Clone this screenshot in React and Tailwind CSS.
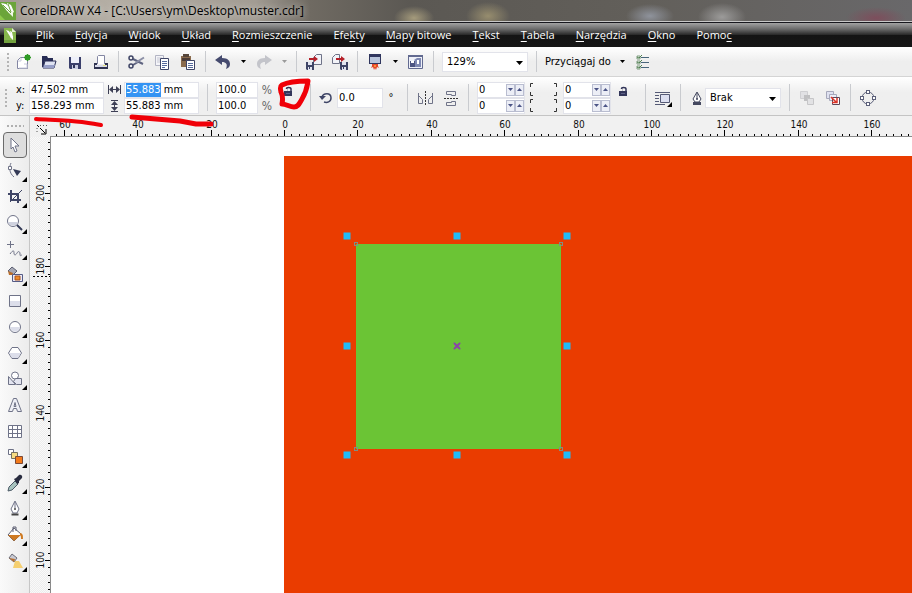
import { useEffect, useRef, useState } from 'react'

const UI_FONT = "font-['DejaVu_Sans_Condensed','Noto_Sans',sans-serif]"

/* ---------- icons ---------- */

function Svg({ w = 18, h = 18, children }) {
  return (
    <svg width={w} height={h} viewBox={`0 0 ${w} ${h}`} fill="none" className="shrink-0" aria-hidden="true">
      {children}
    </svg>
  )
}

const ink = '#3f4566'
const soft = '#6f7388'

const CorelLogo = () => (
  <Svg w={16} h={18}>
    <path d="M0 0h16v18H4L0 14z" fill="#6ba53a" />
    <path d="M0 13l5 5H0z" fill="#8fca4c" />
    <path d="M1 1l5 1 6 6-1 4-4-3z" fill="#fff" />
    <path d="M7 1l4 2 3 7-3 2-3-6z" fill="#fff" />
    <path d="M8 10l5-1v6z" fill="#f1f8e8" />
    <path d="M3 3l8 8M8 2l3 8" stroke="#6ba53a" />
  </Svg>
)

const DocLogo = () => (
  <Svg w={12} h={16}>
    <path d="M0 1h8l4 4v11H0z" fill="#86b64c" />
    <path d="M8 1l4 4H8z" fill="#e4efd2" />
    <path d="M2 3l3 1 3 5-1 2zM6 4l2 1 1 5-2-1zM6 10l3-1v4z" fill="#fff" />
    <path d="M0 13h12v3H0z" fill="#5d8e2f" opacity=".5" />
  </Svg>
)

const NewIcon = () => (
  <Svg>
    <path d="M3.500 7.500l3-3h7v11h-10z" fill="#fff" stroke="#8386a3" />
    <path d="M4 8h3V5M10 11h3v4H5" stroke="#c7c9dc" />
    <circle cx="13.500" cy="4.500" r="3" fill="#2f9a26" />
    <path d="M13.500 1v7M10 4.500h7M11 2l5 5M16 2l-5 5" stroke="#2f9a26" />
  </Svg>
)

const OpenIcon = () => (
  <Svg>
    <path d="M2 3h5l1 2h5v3H5l-2 6H2z" fill="#282d55" />
    <path d="M5 8h11l-2 7H3z" fill="#dfe3f2" stroke="#282d55" />
    <path d="M4 12h11l-1 3H3z" fill="#979fc8" />
  </Svg>
)

const SaveIcon = () => (
  <Svg>
    <path d="M3 4h12v12H4l-1-1z" fill="#3a3f6b" />
    <path d="M5 4h8v6H5z" fill="#eef0fa" />
    <path d="M6 12h6v4H6z" fill="#c9cde2" />
    <path d="M7 12h2v3H7z" fill="#2b3058" />
  </Svg>
)

const PrintIcon = () => (
  <Svg>
    <path d="M5.500 11V3.500l1-1h6V11" fill="#fff" stroke="#8386a3" />
    <path d="M2 10h3v2h8v-2h3v6H2z" fill="#2f3350" />
    <path d="M3 12h12v2H3z" fill="#d8daea" />
    <path d="M11 12h3v1h-3z" fill="#e4e37c" />
  </Svg>
)

const CutIcon = () => (
  <Svg>
    <path d="M6 6l10 5M6 12l5-3" stroke="#5f6480" strokeWidth="2" />
    <path d="M9 9.500l8-5" stroke="#8b8fa6" strokeWidth="2" />
    <circle cx="4" cy="5" r="2" stroke={ink} strokeWidth="1.500" />
    <circle cx="4" cy="13" r="2" stroke={ink} strokeWidth="1.500" />
  </Svg>
)

const CopyIcon = () => (
  <Svg>
    <path d="M2.500 2.500h8v10h-8z" fill="#f4f4f8" stroke="#b3b5c4" />
    <path d="M4 5h5M4 7h3M4 9h3" stroke="#c4c6d2" />
    <path d="M7.500 5.500h8v11h-8z" fill="#fff" stroke={ink} />
    <path d="M9 8.500h5M9 10.500h5M9 12.500h5M9 14.500h3" stroke="#55699b" />
  </Svg>
)

const PasteIcon = () => (
  <Svg>
    <path d="M2 3h10v11H2z" fill="#8a6b4e" />
    <path d="M4 1h6v3H4z" fill="#56453a" />
    <path d="M3 5h8v3H3z" fill="#4c3c37" />
    <path d="M7.500 7.500h8v9h-8z" fill="#fff" stroke={ink} />
    <path d="M9 10.500h5M9 12.500h5M9 14.500h5" stroke="#55699b" />
  </Svg>
)

const UndoIcon = () => (
  <Svg>
    <path d="M1 7l7-5v3c6 0 8 3 8 6 0 2-1 4-4 5 2-5 0-7-4-7v3z" fill="#454a6e" />
  </Svg>
)

const RedoIcon = () => (
  <Svg>
    <path d="M17 7l-7-5v3C4 5 2 8 2 11c0 2 1 4 4 5-2-5 0-7 4-7v3z" fill="#c3c4ca" />
  </Svg>
)

const ImportIcon = () => (
  <Svg>
    <path d="M8.500 4.500l3-3h5v10h-8z" fill="#f2f3f8" stroke={soft} />
    <path d="M4 5h5V3l4 3-4 3V7H4z" fill="#b51f28" />
    <path d="M1 9h8v8H2l-1-1z" fill={ink} />
    <path d="M3 9h4v3H3zM3 14h4v3H3z" fill="#e3e5f0" />
    <path d="M4 14h1v2H4z" fill={ink} />
  </Svg>
)

const ExportIcon = () => (
  <Svg>
    <path d="M1.500 4.500l3-3h4v9h-7z" fill="#f2f3f8" stroke={soft} />
    <path d="M5 5h5V3l4 3-4 3V7H5z" fill="#b51f28" />
    <path d="M9 9h8v8h-7l-1-1z" fill={ink} />
    <path d="M11 9h4v3h-4zM11 14h4v3h-4z" fill="#e3e5f0" />
    <path d="M12 14h1v2h-1z" fill={ink} />
  </Svg>
)

const LauncherIcon = () => (
  <Svg>
    <path d="M3 1h12v10H3z" fill="#2f355d" />
    <path d="M4 4h10v6H4z" fill="#b9c5dc" />
    <path d="M6 11h6v2l1 2-2-1-1 3-1-2-1 2-1-3-2 1 1-2z" fill="#e4472a" />
    <path d="M8 12h2v2H8z" fill="#f8913c" />
  </Svg>
)

const WelcomeIcon = () => (
  <Svg>
    <path d="M1.500 2.500h14v13h-14z" fill="#eef0f8" stroke="#626a90" />
    <path d="M1 2h15v2H1z" fill="#626a90" />
    <path d="M3 8h5v6H3z" fill="#4d5582" />
    <path d="M4 8h3v2H4z" fill="#fff" />
    <path d="M7 7l3-2h4v9H8V8z" fill="#7f89b3" />
    <path d="M10 7h2v4h-2z" fill="#fff" />
  </Svg>
)

const OptionsIcon = () => (
  <Svg>
    <path d="M7 4.500h8M7 9.500h8M7 14.500h8" stroke="#49667b" />
    <path d="M3 3h3v3H3zM3 8h3v3H3zM3 13h3v3H3z" fill="#fff" stroke="#7e9c80" />
    <path d="M3 4l2 1 3-3M3 9l2 1 3-3M3 14l2 1 3-3" stroke="#4f8050" />
  </Svg>
)

const WidthIcon = () => (
  <Svg w={13} h={9}>
    <path d="M.5 0v9M12.500 0v9M2 4.500h9" stroke="#3d3f55" />
    <path d="M1 4.500L5 1v7zM12 4.500L8 1v7z" fill="#3d3f55" />
  </Svg>
)

const HeightIcon = () => (
  <Svg w={9} h={12}>
    <path d="M1 .5h7M1 11.500h7M4.500 2v8" stroke="#3d3f55" />
    <path d="M4.500 1L8 5H1zM4.500 11L8 7H1z" fill="#3d3f55" />
  </Svg>
)

const LockIcon = () => (
  <Svg w={10} h={11}>
    <path d="M3.500 5V3c0-1 .5-1.500 2-1.500S8 2 8 3v2" stroke="#33365a" strokeWidth="1.500" />
    <path d="M1 5h8v5H1z" fill="#33365a" />
    <path d="M3 7h4v1H3z" fill="#5f6288" />
    <path d="M2 3h2v2H2z" fill="#f0f0f0" />
  </Svg>
)

const RotateIcon = () => (
  <Svg w={14} h={14}>
    <path d="M3 6C4 2 12 1 12 7c0 4-4 5-7 4" stroke={ink} strokeWidth="1.500" />
    <path d="M0 5h7L3 9z" fill={ink} />
  </Svg>
)

const MirrorH = () => (
  <Svg>
    <path d="M2.500 4v10.500h4v-4l-4-4M16.500 4v10.500h-4v-4l4-4" stroke={soft} />
    <path d="M9.500 2v14" stroke="#333" strokeDasharray="2 1" />
  </Svg>
)

const MirrorV = () => (
  <Svg>
    <path d="M4.500 2.500h9v4h-4v-1h-5zM4.500 16.500h9v-4h-4v1h-5z" stroke={soft} />
    <path d="M2 9.500h14" stroke="#333" strokeDasharray="2 1" />
  </Svg>
)

const WrapIcon = () => (
  <Svg>
    <path d="M1 3.500h15M1 6.500h4M1 9.500h4M1 12.500h4M1 15.500h10" stroke="#555a75" />
    <path d="M6.500 5.500h9v8h-9z" fill="#dcdff0" stroke="#555a75" />
    <path d="M18 13v5h-5z" fill="#000" />
  </Svg>
)

const OutlinePen = () => (
  <Svg w={12} h={16}>
    <path d="M6 2l4 7-2 3H4L2 9z" fill="#fff" stroke="#44485f" />
    <path d="M6 3v6" stroke="#44485f" />
    <circle cx="6" cy="9" r="1" fill="#44485f" />
    <path d="M2 12h8v3H2z" fill="#44485f" />
  </Svg>
)

const ToFront = () => (
  <Svg>
    <path d="M2.500 2.500h7v7h-7z" fill="#e1e1e4" stroke="#cfcfd2" />
    <path d="M6 6h6v6H6z" fill="#c0c0c2" />
    <path d="M9.500 9.500h6v6h-6z" fill="#e2e2e4" stroke="#c6c6c8" />
  </Svg>
)

const ToBack = () => (
  <Svg>
    <path d="M2.500 2.500h7v7h-7z" fill="#dfe1f0" stroke="#a6a8bb" />
    <path d="M5.500 5.500h7v6h-7z" fill="#eceef8" stroke="#a6a8bb" />
    <path d="M8.500 8.500h7v7h-7z" fill="#fff" stroke="#5e4658" />
    <path d="M7 8l5 5M13 9v4.500H8" stroke="#dc3428" strokeWidth="1.500" />
  </Svg>
)

const CurvesIcon = () => (
  <Svg>
    <circle cx="9" cy="9" r="6" stroke="#5c607a" />
    <g fill="#fff" stroke="#5c607a">
      <rect x="7.500" y="1.500" width="3" height="3" />
      <rect x="7.500" y="13.500" width="3" height="3" />
      <rect x="1.500" y="7.500" width="3" height="3" />
      <rect x="13.500" y="7.500" width="3" height="3" />
    </g>
  </Svg>
)

const Spot = ({ side }) => (
  <Svg w={6} h={13}>
    {side === 'left' ? (
      <path d="M4 .5H1.500V4M4 12.500H1.500V9" stroke="#333" />
    ) : (
      <path d="M1 .5h2.500V4M1 12.500h2.500V9" stroke="#333" />
    )}
  </Svg>
)

/* ---------- toolbox drawings ---------- */

const tools = [
  { name: 'Wskaźnik', art: <path d="M5 2l8 8H9l2 5-2 1-2-5-2 2z" fill="#fff" stroke={soft} /> },
  {
    name: 'Kształt',
    fly: true,
    art: (
      <>
        <path d="M5 1c-2 4-2 10 3 14" stroke={soft} />
        <path d="M2.500 4.500h3v3h-3z" fill="#fff" stroke={soft} />
        <path d="M7 7l8 2-4 5z" fill="#343a56" />
      </>
    ),
  },
  {
    name: 'Kadrowanie',
    fly: true,
    art: (
      <>
        <path d="M5 2v10h10M2 6h10v9" stroke={ink} strokeWidth="2" />
        <path d="M4 14L16 2" stroke={ink} />
      </>
    ),
  },
  {
    name: 'Zoom',
    fly: true,
    art: (
      <>
        <circle cx="7" cy="7" r="5.500" fill="#fff" stroke={soft} />
        <path d="M2 8h10c-1 5-9 5-10 0z" fill="#cfd2df" />
        <path d="M11 11l5 5" stroke="#343a56" strokeWidth="2" />
      </>
    ),
  },
  {
    name: 'Rysunek odręczny',
    fly: true,
    art: <path d="M4.500 1v7M1 4.500h7M4 14c3-4 4-4 4-1s2 2 3 0 3-2 3 1 1 1 2 1" stroke={soft} />,
  },
  {
    name: 'Inteligentne wypełnianie',
    fly: true,
    art: (
      <>
        <path d="M6 1l5 4-4 4-5-4z" fill="#a6a8b5" stroke="#5a5d70" />
        <path d="M2 5l5 2v2H3z" fill="#b86e2d" />
        <path d="M6.500 8.500h10v7h-10z" fill="#e9e9f5" stroke="#555b85" />
        <path d="M9 10h5v4H9z" fill="#ef8a26" stroke="#a95220" />
      </>
    ),
  },
  {
    name: 'Prostokąt',
    fly: true,
    art: (
      <>
        <path d="M3.500 3.500h11v11h-11z" fill="#fff" stroke={soft} />
        <path d="M4 9h10v5H4z" fill="#dcdeea" />
      </>
    ),
  },
  {
    name: 'Elipsa',
    fly: true,
    art: (
      <>
        <circle cx="9" cy="9" r="5.500" fill="#fff" stroke={soft} />
        <path d="M4 9h10c-1 6-9 6-10 0z" fill="#dcdeea" />
      </>
    ),
  },
  {
    name: 'Wielokąt',
    fly: true,
    art: (
      <>
        <path d="M6 3.500h6L15.500 9 12 14.500H6L2.500 9z" fill="#fff" stroke={soft} />
        <path d="M3 9h12l-3 5H6z" fill="#dcdeea" />
      </>
    ),
  },
  {
    name: 'Kształty podstawowe',
    fly: true,
    art: (
      <>
        <path d="M2.500 6.500v8h7z" fill="#e3e5f0" stroke={soft} />
        <circle cx="9" cy="5.500" r="3.500" fill="#fff" stroke={soft} />
        <path d="M9.500 8.500h6v6h-5l-3-3z" fill="#e3e5f0" stroke={soft} />
      </>
    ),
  },
  {
    name: 'Tekst',
    art: <path d="M7.500 2.500h3l5 13h-4l-1-3h-3l-1 3h-4zM9 6.500l-1 4h2z" fill="#eeeff6" stroke={soft} />,
  },
  {
    name: 'Tabela',
    art: (
      <>
        <path d="M2.500 3.500h13v12h-13z" fill="#fff" stroke={soft} />
        <path d="M6.500 4v11M11.500 4v11M3 7.500h12M3 11.500h12" stroke={soft} />
      </>
    ),
  },
  {
    name: 'Metamorfoza',
    fly: true,
    art: (
      <>
        <path d="M2.500 1.500h5v5h-5z" fill="#fff" stroke="#6c7085" />
        <path d="M5.500 4.500h6v6h-6z" fill="#f6dc82" stroke="#75705f" />
        <path d="M9.500 8.500h7v7h-7z" fill="#f37a1a" stroke="#7a4a38" />
      </>
    ),
  },
  {
    name: 'Kroplomierz',
    fly: true,
    art: (
      <>
        <path d="M9 7l3 3-6 6-4 1 1-4z" fill="#a8c3bf" stroke="#4c5b67" />
        <path d="M8 5l2-1 3-3c2-1 4 1 3 3l-3 3v2l-2 1z" fill="#282b3f" />
      </>
    ),
  },
  {
    name: 'Kontur',
    fly: true,
    art: (
      <>
        <path d="M9 1l4 8-2 4H7L5 9z" fill="#fff" stroke={soft} />
        <path d="M9 2v6" stroke={soft} />
        <circle cx="9" cy="9" r="1" fill="#444" />
        <path d="M5.500 14.500h7" stroke="#444" strokeWidth="2" />
      </>
    ),
  },
  {
    name: 'Wypełnienie',
    fly: true,
    art: (
      <>
        <path d="M8 2l7 6-7 7-6-6z" fill="#fff" stroke="#5a5d70" />
        <path d="M2 9h13l-7 6z" fill="#cf7a22" />
        <path d="M7 6V1h3v4" stroke="#5a5d70" />
        <path d="M14 8c2 0 2 2 2 5" stroke="#cf7a22" strokeWidth="2" />
      </>
    ),
  },
  {
    name: 'Wypełnienie interakcyjne',
    fly: true,
    art: (
      <>
        <path d="M6 2l5 4-3 4-5-4z" fill="#c9cad3" stroke="#6b6d79" />
        <path d="M3 6l6 1-1 3z" fill="#b86e2d" />
        <path d="M9 9h4l4 7H7z" fill="#f5cf70" />
      </>
    ),
  },
]

/* ---------- small parts ---------- */

const Grip = () => (
  <span className="h-5 w-1 shrink-0 bg-[radial-gradient(#b4b4b4_1px,transparent_1px)] bg-[length:4px_4px]" />
)

const Sep = () => (
  <span className="flex w-[9px] shrink-0 justify-center self-stretch py-1">
    <span className="w-px bg-[#c9cbcf]" />
  </span>
)

function IconButton({ label, children }) {
  return (
    <button aria-label={label} className="flex h-6 w-[26px] shrink-0 items-center justify-center">
      {children}
    </button>
  )
}

function Drop({ label, muted }) {
  return (
    <button aria-label={label} className="flex h-6 w-[15px] shrink-0 items-center justify-center">
      <svg width="5" height="3" viewBox="0 0 5 3" aria-hidden="true">
        <path d="M0 0h5L2.500 3z" fill={muted ? '#9a9a9a' : '#000'} />
      </svg>
    </button>
  )
}

function Select({ label, value, className }) {
  return (
    <span className={`relative h-5 shrink-0 border border-[#e2e3ea] bg-white ${className}`}>
      <select aria-label={label} className="h-full w-full appearance-none bg-transparent px-1 outline-none">
        <option>{value}</option>
      </select>
      <svg className="pointer-events-none absolute top-2 right-1" width="7" height="4" viewBox="0 0 7 4" aria-hidden="true">
        <path d="M0 0h7L3.500 4z" fill="#000" />
      </svg>
    </span>
  )
}

function Field({ label, value, className }) {
  const [text, setText] = useState(value)
  return (
    <input
      aria-label={label}
      value={text}
      onChange={(e) => setText(e.target.value)}
      className={`h-4 min-w-0 border border-[#e2e3ea] bg-white px-px outline-none ${className || ''}`}
    />
  )
}

function Spinner({ label }) {
  return (
    <span className="flex h-4 w-12 items-center border border-[#e2e3ea] bg-white">
      <input aria-label={label} defaultValue="0" className="w-7 min-w-0 px-px outline-none" />
      <button aria-label={`${label} mniej`} className="flex h-3 w-[9px] items-center justify-center border border-[#b9bdd0] bg-[#eceef6]">
        <svg width="5" height="3" viewBox="0 0 5 3" aria-hidden="true"><path d="M0 0h5L2.500 3z" fill="#4b5486" /></svg>
      </button>
      <button aria-label={`${label} więcej`} className="flex h-3 w-[9px] items-center justify-center border border-[#b9bdd0] bg-[#eceef6]">
        <svg width="5" height="3" viewBox="0 0 5 3" aria-hidden="true"><path d="M0 3h5L2.500 0z" fill="#4b5486" /></svg>
      </button>
    </span>
  )
}

/* ---------- bars ---------- */

// [before, underlined letter, after]
const menus = [
  ['', 'P', 'lik'],
  ['', 'E', 'dycja'],
  ['', 'W', 'idok'],
  ['', 'U', 'kład'],
  ['', 'R', 'ozmieszczenie'],
  ['Efe', 'k', 'ty'],
  ['', 'M', 'apy bitowe'],
  ['', 'T', 'ekst'],
  ['', 'T', 'abela'],
  ['', 'N', 'arzędzia'],
  ['', 'O', 'kno'],
  ['Pomo', 'c', ''],
]

function TitleBar() {
  return (
    <header className="flex h-[22px] items-center gap-1 overflow-hidden border-b border-[#c8c8c8] bg-[radial-gradient(ellipse_20px_12px_at_414px_18px,#a59b7c,transparent),radial-gradient(ellipse_22px_14px_at_488px_16px,#978d6e,transparent),radial-gradient(ellipse_24px_12px_at_650px_16px,#8f939c,transparent),radial-gradient(ellipse_24px_14px_at_722px_17px,#9c9b9a,transparent),radial-gradient(ellipse_30px_11px_at_876px_18px,#7d4e5c,transparent),linear-gradient(90deg,#a29b92,#b4aea4_12%,#a29c93_28%,#6f6a62_34%,#5b5853_45%,#625f5a_70%,#69686a)]">
      <CorelLogo />
      <h1 className="text-[12px] whitespace-nowrap text-black [text-shadow:0_0_6px_#ddd]">
        CorelDRAW X4 - [C:\Users\ym\Desktop\muster.cdr]
      </h1>
    </header>
  )
}

function MenuBar() {
  return (
    <nav className="flex h-[25px] items-center border-t border-[#17171d] bg-[linear-gradient(#a2a2a2,#6b6b6b_25%,#2c2c2c_48%,#141414_52%,#161616)] pl-1 text-[11px] text-white">
      <DocLogo />
      <div className="flex gap-[21px] pl-5">
        {menus.map(([a, key, b]) => (
          <button key={a + key + b} className="whitespace-nowrap">
            {a}<span className="underline underline-offset-2">{key}</span>{b}
          </button>
        ))}
      </div>
    </nav>
  )
}

function StandardBar() {
  return (
    <div className="flex h-[29px] items-center bg-gradient-to-b from-white to-[#eeeeee] to-50% pl-[6px]">
      <Grip />
      <IconButton label="Nowy"><NewIcon /></IconButton>
      <IconButton label="Otwórz"><OpenIcon /></IconButton>
      <IconButton label="Zapisz"><SaveIcon /></IconButton>
      <IconButton label="Drukuj"><PrintIcon /></IconButton>
      <Sep />
      <IconButton label="Wytnij"><CutIcon /></IconButton>
      <IconButton label="Kopiuj"><CopyIcon /></IconButton>
      <IconButton label="Wklej"><PasteIcon /></IconButton>
      <Sep />
      <IconButton label="Cofnij"><UndoIcon /></IconButton>
      <Drop label="Lista cofania" />
      <IconButton label="Ponów"><RedoIcon /></IconButton>
      <Drop label="Lista ponawiania" muted />
      <Sep />
      <IconButton label="Importuj"><ImportIcon /></IconButton>
      <IconButton label="Eksportuj"><ExportIcon /></IconButton>
      <Sep />
      <IconButton label="Uruchamianie aplikacji"><LauncherIcon /></IconButton>
      <Drop label="Lista aplikacji" />
      <IconButton label="Ekran powitalny"><WelcomeIcon /></IconButton>
      <Sep />
      <Select label="Poziom powiększenia" value="129%" className="mx-1 w-[86px]" />
      <Sep />
      <button className="px-1 whitespace-nowrap">Przyciągaj do</button>
      <Drop label="Opcje przyciągania" />
      <IconButton label="Opcje"><OptionsIcon /></IconButton>
    </div>
  )
}

function PropertyBar() {
  return (
    <div className="relative flex h-10 items-center border-t border-b border-t-[#d4d4d4] border-b-[#c4c4c4] bg-gradient-to-b from-white to-[#efefef] to-40% pt-[3px] pl-1">
      <Grip />
      <div className="ml-2 grid grid-cols-[13px_75px] items-center">
        <span>x:</span>
        <Field label="x" value="47.502 mm" />
        <span>y:</span>
        <Field label="y" value="158.293 mm" />
      </div>
      <div className="grid grid-cols-[20px_75px] items-center">
        <span className="flex justify-center"><WidthIcon /></span>
        <div className="relative flex">
          <Field label="Szerokość" value="55.883 mm" className="w-full border-[#8fc0e8]" />
          <span aria-hidden="true" className="absolute inset-y-px left-[2px] flex items-center bg-[#3393f3] leading-none text-white">55.883</span>
        </div>
        <span className="flex justify-center"><HeightIcon /></span>
        <Field label="Wysokość" value="55.883 mm" />
      </div>
      <span className="w-1" />
      <Sep />
      <div className="ml-1 grid grid-cols-[42px_18px] items-center">
        <Field label="Skala w poziomie" value="100.0" />
        <span className="text-center text-[12px] text-[#666]">%</span>
        <Field label="Skala w pionie" value="100.0" />
        <span className="text-center text-[12px] text-[#666]">%</span>
      </div>
      <button aria-label="Zachowaj proporcje" className="mb-3 ml-0.5 flex w-5 justify-center"><LockIcon /></button>
      <span className="w-2" />
      <Sep />
      <label htmlFor="angle" className="ml-1"><RotateIcon /></label>
      <input id="angle" aria-label="Kąt obrotu" defaultValue="0.0" className="ml-1 h-5 w-[46px] border border-[#e2e3ea] bg-white px-px outline-none" />
      <span className="w-4 text-center">°</span>
      <span className="w-1" />
      <Sep />
      <IconButton label="Odbij w poziomie"><MirrorH /></IconButton>
      <IconButton label="Odbij w pionie"><MirrorV /></IconButton>
      <Sep />
      <div className="ml-1 grid grid-cols-[48px_38px_48px]">
        {['górny', 'dolny'].map((row) => (
          <div key={row} className="contents">
            <Spinner label={`Lewy ${row} róg`} />
            <span className="flex items-center justify-between px-1"><Spot side="left" /><Spot side="right" /></span>
            <Spinner label={`Prawy ${row} róg`} />
          </div>
        ))}
      </div>
      <button aria-label="Zaokrąglaj razem" className="mb-3 ml-0.5 flex w-5 justify-center"><LockIcon /></button>
      <span className="w-2" />
      <Sep />
      <IconButton label="Zawijaj tekst"><WrapIcon /></IconButton>
      <Sep />
      <span className="flex w-5 justify-center pl-1"><OutlinePen /></span>
      <Select label="Szerokość konturu" value="Brak" className="w-[76px]" />
      <span className="w-1" />
      <Sep />
      <IconButton label="Do przodu"><ToFront /></IconButton>
      <IconButton label="Do tyłu"><ToBack /></IconButton>
      <Sep />
      <IconButton label="Zamień na krzywe"><CurvesIcon /></IconButton>

      {/* red marker strokes */}
      <svg className="pointer-events-none absolute top-0 left-0 z-10 overflow-visible" width="320" height="54" viewBox="0 77 320 54" fill="none" stroke="#f00008" strokeLinecap="round" strokeLinejoin="round" aria-hidden="true">
        <path d="M36 119c20 1 32 1 46 3s14 2 19 3" strokeWidth="4" />
        <path d="M132 117l48 4 16 3h15" strokeWidth="5" />
        <path d="M281 92c-1-4-1-6 1-7 8-4 18-4 26-4-1 8-3 13-6 18s-4 8-8 8-8-3-12-3c1-5 1-8-1-12" strokeWidth="5" />
      </svg>
    </div>
  )
}

/* ---------- workspace ---------- */

function Toolbox() {
  return (
    <aside className="flex w-[30px] shrink-0 flex-col items-center border-r border-[#c6c6c6] bg-gradient-to-r from-[#fafafa] to-[#ececec] pt-2">
      <span className="h-1 w-[18px] bg-[radial-gradient(#b0b0b0_1px,transparent_1px)] bg-[length:4px_4px]" />
      <div className="flex flex-col pt-1">
        {tools.map((tool, i) => (
          <button
            key={tool.name}
            aria-label={tool.name}
            className={`relative flex h-[26px] w-6 items-center justify-center ${
              i === 0 ? 'rounded-sm border border-[#6b6b6b] bg-[#dedede]' : ''
            }`}
          >
            <Svg>{tool.art}</Svg>
            {tool.fly && (
              <svg className="absolute right-0 bottom-0.5" width="5" height="5" viewBox="0 0 5 5" aria-hidden="true">
                <path d="M5 0v5H0z" fill="#000" />
              </svg>
            )}
          </button>
        ))}
      </div>
    </aside>
  )
}

const STEP = 73.4 // screen distance of 20 mm

// rulers only draw the ticks that fit
function useSize() {
  const ref = useRef(null)
  const [size, setSize] = useState({ width: 0, height: 0 })
  useEffect(() => {
    const observer = new ResizeObserver(([entry]) => setSize(entry.contentRect))
    observer.observe(ref.current)
    return () => observer.disconnect()
  }, [])
  return [ref, size]
}

function HorizontalRuler() {
  const [ref, { width }] = useSize()
  const ticks = []
  for (let t = -31; 254 + (t * STEP) / 10 < width; t++) ticks.push(t)

  return (
    <div ref={ref} className="h-[21px] shrink-0 bg-[#f1f1f1]">
      <svg className="block h-full w-full" aria-hidden="true">
        <path d="M7 9l2 2M10 12l5 5M16 13v5h-5" stroke="#000" fill="none" />
        <path d="M7 12v6M10 9.500h7" stroke="#555" strokeDasharray="1 2" fill="none" />
        {ticks.map((t) => {
          const x = Math.round(254 + (t * STEP) / 10)
          const major = t % 10 === 0
          return (
            <g key={t}>
              <rect x={x} y={major ? 14 : 18} width="1" height={major ? 6 : 2} fill="#000" />
              {major && x < width - 12 && (
                <text x={x + 1} y="12" textAnchor="middle" fontSize="10" fill="#111">
                  {Math.abs(t * 2)}
                </text>
              )}
            </g>
          )
        })}
        <rect y="20" x="20" width="100%" height="1" fill="#8a8a8a" />
      </svg>
    </div>
  )
}

function VerticalRuler() {
  const [ref, { height }] = useSize()
  const ticks = []
  for (let t = 107; 56 + ((100 - t) * STEP) / 10 < height; t--) ticks.push(t)

  return (
    <div ref={ref} className="relative w-[21px] shrink-0 border-r border-[#8a8a8a] bg-[repeating-conic-gradient(#f9f9f9_0_25%,#ededed_0_50%)] bg-[length:2px_2px]">
      <svg className="absolute inset-0 h-full w-full" aria-hidden="true">
        {ticks.map((t) => {
          const y = Math.round(56 + ((100 - t) * STEP) / 10)
          const major = t % 10 === 0
          return (
            <g key={t}>
              <rect x={major ? 15 : 18} y={y} width={major ? 5 : 2} height="1" fill="#000" />
              {major && y < height - 12 && (
                <text transform={`translate(14 ${y}) rotate(-90)`} textAnchor="middle" fontSize="10" fill="#111">
                  {t * 2}
                </text>
              )}
            </g>
          )
        })}
        <path d="M3 139.500h17" stroke="#000" strokeDasharray="2 2" />
      </svg>
    </div>
  )
}

// selection handles around the square
const handles = [
  'left-0 top-0',
  'left-1/2 top-0',
  'left-full top-0',
  'left-0 top-1/2',
  'left-full top-1/2',
  'left-0 top-full',
  'left-1/2 top-full',
  'left-full top-full',
]

const nodes = ['left-0 top-0', 'left-full top-0', 'left-0 top-full', 'left-full top-full']

function Canvas() {
  return (
    <main className="relative flex-1 overflow-hidden bg-white">
      <div className="absolute top-[19px] right-0 bottom-0 left-[233px] bg-[#ea3c00]">
        <div className="absolute top-[88px] left-[72px] size-[205px] bg-[#6bc435]">
          {nodes.map((pos) => (
            <span key={pos} className={`absolute size-1 -translate-1/2 border border-[#7f8f84] ${pos}`} />
          ))}
        </div>
        <div className="absolute top-[80px] left-[63px] h-[219px] w-[220px]">
          {handles.map((pos) => (
            <span key={pos} className={`absolute size-[7px] -translate-1/2 bg-[#1fbcf8] ${pos}`} />
          ))}
          <svg className="absolute top-1/2 left-1/2 -translate-1/2" width="7" height="7" viewBox="0 0 7 7" aria-hidden="true">
            <path d="M0 0l7 7M7 0L0 7" stroke="#8a45a8" strokeWidth="2" />
          </svg>
        </div>
      </div>
    </main>
  )
}

export default function App() {
  return (
    <div className={`flex min-h-screen flex-col overflow-hidden bg-[#f0f0f0] text-[11px] leading-4 text-black ${UI_FONT}`}>
      <div className="font-['Open_Sans','Noto_Sans',sans-serif]">
        <TitleBar />
        <MenuBar />
      </div>
      <StandardBar />
      <PropertyBar />
      <div className="flex flex-1">
        <Toolbox />
        <div className="flex min-w-0 flex-1 flex-col">
          <HorizontalRuler />
          <div className="flex flex-1">
            <VerticalRuler />
            <Canvas />
          </div>
        </div>
      </div>
    </div>
  )
}
